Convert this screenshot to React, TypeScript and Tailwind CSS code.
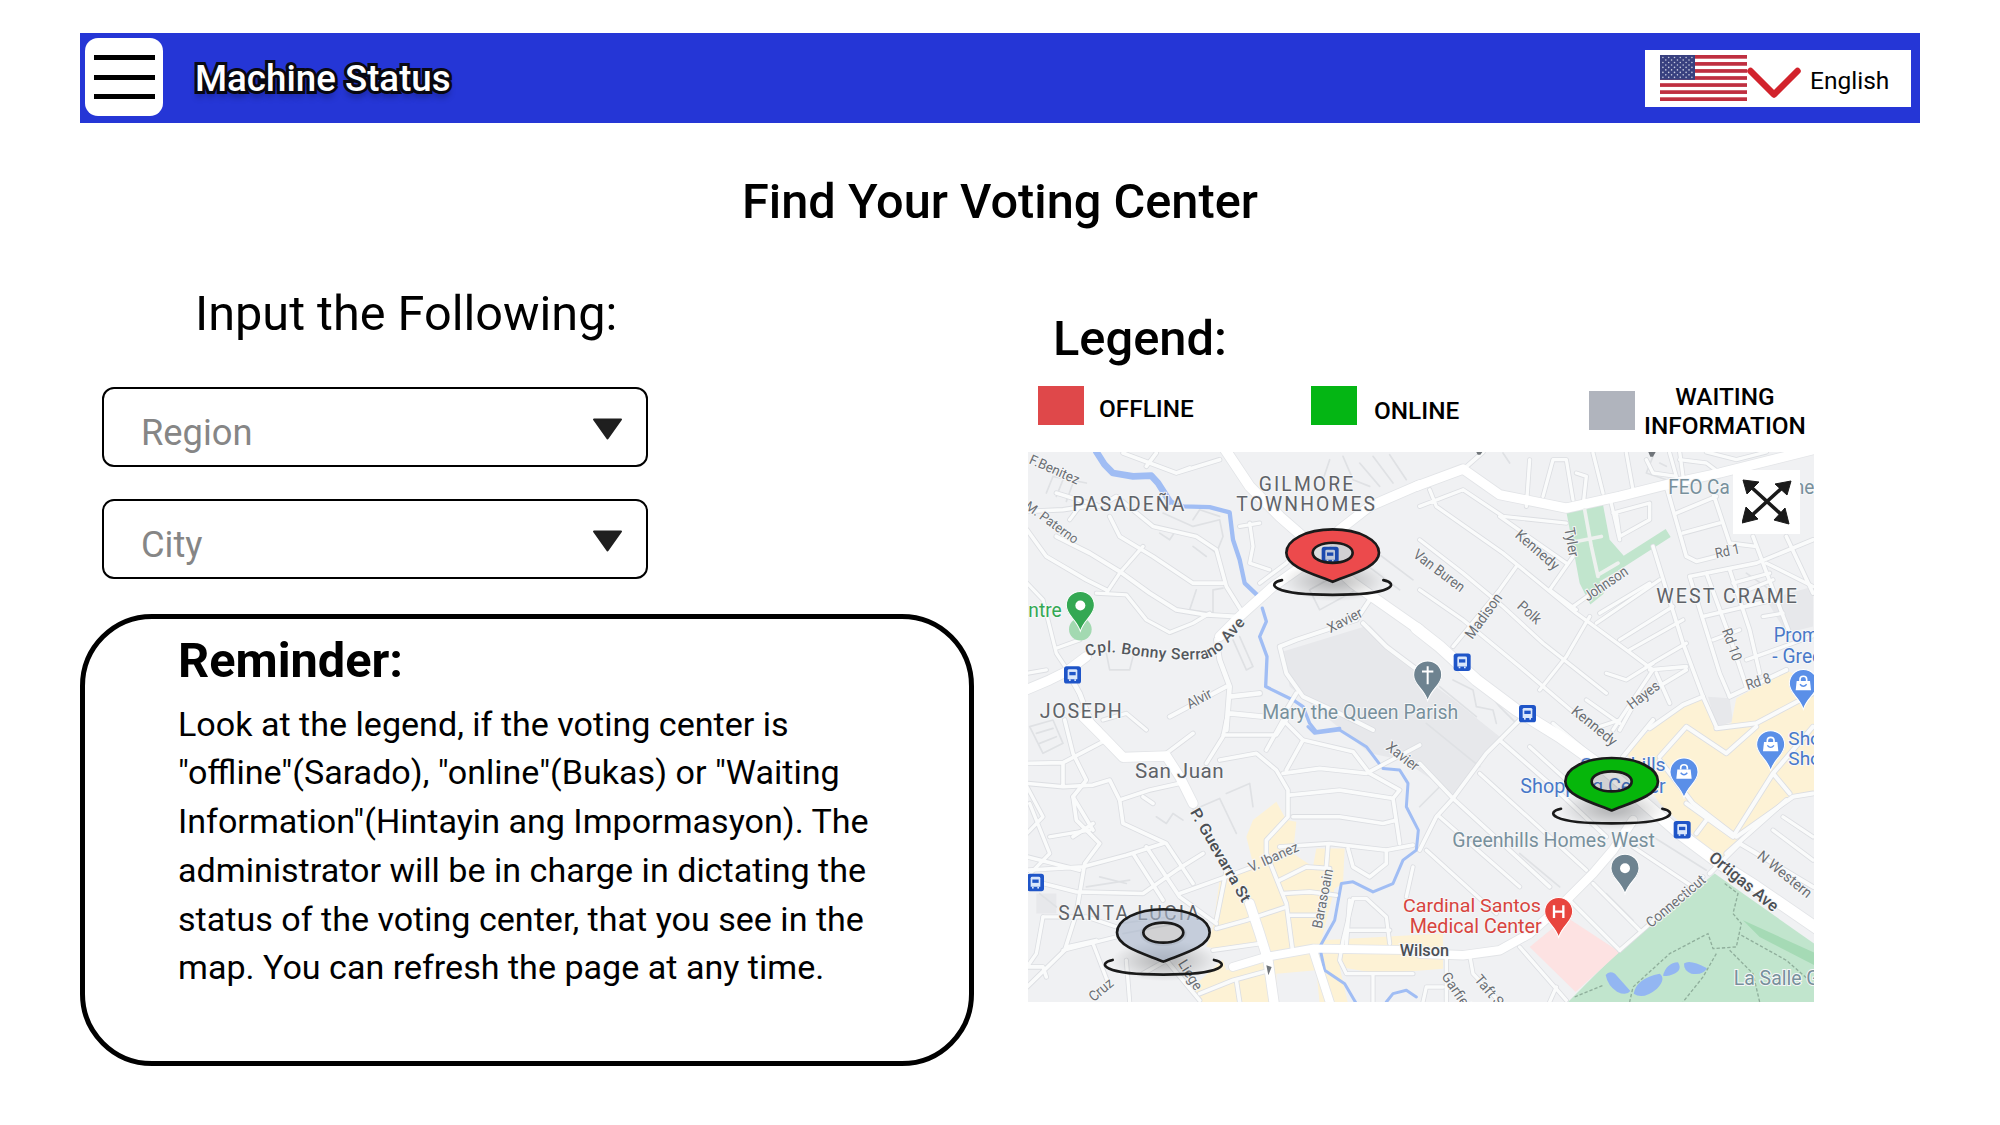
import React from "react";

/* Map drawing: three drawing units per rendered pixel. */

type Road = [width: number, d: string, dx?: number, dy?: number];

const mainRoads: Road[] = [
  // north-west quarter
  [30, "M610 20 L690 140 L780 230 L860 300 L1000 430 L1100 500 L1200 570"],
  [28, "M0 758 L90 720 L140 695 L200 650 M600 590 L660 530 L760 440 L860 370 L960 270 L1050 200 L1200 135"],
  // north-east quarter
  [28, "M-10 140 L130 88 L240 165 L440 205 L600 170 L760 130 L900 100 L1200 25", 1200, 0],
  [34, "M-10 565 L60 620 L170 720 L290 810 L420 890 L560 990 L780 1180 L900 1270 L1010 1340 L1200 1470", 1200, 0],
  // south-west quarter
  [28, "M190 -10 L250 50 L310 112 L440 108 L480 170 L520 250 M690 550 L720 640 L745 720 L765 860", 0, 840],
  [24, "M640 740 L740 710 L880 685 L1200 690 M880 690 L935 860", 0, 840],
  // south-east quarter
  [26, "M0 700 L130 705 L240 690 L330 640 L420 560 L520 460 L580 390 L640 300", 1200, 840],
];

const streets: Road[] = [
  [11, "M310 40 L470 100 L600 60 M380 80 L410 40 M470 100 L510 85"],
  [11, "M22 215 L130 210 L230 195 M110 160 L240 200 L290 170 L400 260 L530 290 L590 330 L620 440 L670 520"],
  [12, "M110 290 L210 340 L300 395 L390 460 L470 510 L560 525 L650 530"],
  [11, "M22 270 L80 350 L200 420 L260 450 M270 230 L300 290 L400 350 L520 430 L610 430"],
  [10, "M370 320 L300 400 L260 460 M150 240 L180 200 M230 460 L320 465 L380 540 L450 578 L520 550 L570 520"],
  [10, "M22 430 L70 480 L110 640 L150 700 L230 870 M110 625 L180 600"],
  [14, "M140 690 L180 760 L210 840 L240 870 M590 600 L600 660 L630 740 L620 870 M630 770 L720 760 M630 820 L730 830"],
  [12, "M780 620 L830 600 L920 570 L1010 540 L1050 480 M780 620 L800 700 L850 770 L980 830 L1060 870"],
  [12, "M1030 550 L1100 620 L1200 695 M830 760 L800 810 M450 830 L620 740"],
  [10, "M250 840 L320 820 L380 870 M22 700 L80 690"],
  [10, "M690 250 L700 320 L690 370 L750 390 M660 260 L720 250 M720 430 L800 370 L860 300"],

  [10, "M0 200 L130 150 L250 230 L440 250 M30 150 L50 200 L250 340 L470 520 L620 630 L700 690", 1200, 0],
  [10, "M0 300 L130 400 L250 500 L370 610 L560 760 M0 450 L130 540 L300 680 L500 850 M240 230 L440 370", 1200, 0],
  [10, "M290 380 L240 450 L100 620 M460 350 L390 450 L470 510 M510 530 L440 650 L360 750 M700 690 L580 870", 1200, 0],
  [10, "M320 200 L330 60 M370 170 L400 60 L440 60 L460 180 M490 200 L500 110 L470 100 M520 40 L550 160 M620 40 L640 150", 1200, 0],
  [11, "M130 90 L190 37 M740 140 L800 350 L830 365 L890 350 M700 320 L740 450 L790 610 L850 770 L890 860", 1200, 0],
  [11, "M770 220 L890 170 M880 160 L930 310 L1010 320 M790 280 L900 250 M1000 290 L1060 450 L1110 580 M1100 290 L1180 460", 1200, 0],
  [11, "M810 410 L1010 370 L1180 300 M810 410 L850 540 L900 700 L930 770 M850 530 L1060 480 M930 390 L990 570 L1020 700 M860 400 L930 590 L980 740", 1200, 0],
  [10, "M940 430 L1050 400 M960 460 L1060 420 M880 600 L960 570 M980 660 L1120 610 L1200 580 M1030 530 L1090 520", 1200, 0],
  [10, "M530 550 L720 420 M540 520 L690 430 M600 600 L760 500 M630 630 L790 540 M680 680 L800 610 M460 500 L600 400", 1200, 0],
  [10, "M590 220 L600 290 L690 240 L690 190 L580 220 M570 170 L600 300 M780 60 L860 70 L900 100 M860 37 L950 60 L1040 37", 1200, 0],
  [10, "M680 60 L700 100 L770 110 L750 40 M780 37 L790 110 M1040 370 L1180 440 M500 780 L600 850 M560 700 L620 720 L700 670", 1200, 0],
  [11, "M690 690 L800 680 M710 700 L750 790 M600 870 L650 780 L800 690", 1200, 0],
  [12, "M690 865 L790 795 L850 770 M930 770 L1100 690 M890 865 L1010 850 L1180 760", 1200, 0],

  [11, "M135 0 L160 100 L200 180 L160 230 L170 300 L240 370 L195 430 L170 580 L135 690 L22 800", 0, 840],
  [11, "M22 130 L130 128 L250 65 M130 130 L130 200 L22 190 M130 200 L220 195 L270 180 L300 240 L310 310 L440 370 L520 490", 0, 840],
  [11, "M300 240 L390 210 L480 190 M440 100 L520 40 M560 130 L610 50 L620 0 M610 45 L770 45 L800 0 M600 120 L710 100 L770 150 L805 210 L805 290 L740 360 L740 400 L800 550 L820 700", 0, 840],
  [11, "M740 90 L790 0 L850 60 L1000 95 L1050 160 L1140 210 L1120 235 L960 210 L810 225", 0, 840],
  [11, "M790 160 L900 145 L1040 160 L1200 75 M800 150 L850 60 M820 290 L960 290 L1090 310 L1130 300 M1120 235 L1140 370 M780 380 L930 370 L1100 390 L1180 375", 0, 840],
  [11, "M22 450 L190 440 L320 405 L430 370 M22 410 L180 450 M70 490 L170 515 L370 520 L470 450 L550 400 M340 400 L430 540", 0, 840],
  [11, "M380 380 L480 530 L590 610 M480 520 L620 470 L700 440 M620 450 L590 600 M590 625 L680 600 L800 560 M580 690 L720 670", 0, 840],
  [10, "M70 590 L200 590 L290 620 M130 690 L290 650 M220 670 L270 800 M320 720 L330 845 M140 680 L230 660", 0, 840],
  [11, "M780 480 L860 440 L930 445 M790 520 L870 515 L950 525 M810 585 L900 585 M925 375 L920 440 M985 385 L1000 440 L1050 470 L1100 430 L1100 390", 0, 840],
  [11, "M540 820 L640 780 L750 750 M650 780 L660 845 M370 760 L440 720 L540 840 M990 540 L980 670 M990 630 L1110 630", 0, 840],
  [10, "M1110 670 L1100 590 L1040 535 L1000 535 L970 660 L960 720 L980 760 L1180 760 M1060 760 L1060 845 M1180 440 L1160 530", 0, 840],
  [10, "M22 200 L70 290 L22 340 M30 250 L90 400 L22 470 M90 350 L210 330 M70 590 L50 700 L22 740", 0, 840],
  [11, "M160 230 L220 330 M160 350 L220 310 M370 230 L400 250 M22 740 L70 740 L80 770", 0, 840],

  [11, "M0 390 L50 290 L100 235 L200 100 L250 50 L300 0 M100 235 L0 130 M100 235 L390 500 M240 60 L400 200 L560 350", 1200, 840],
  [10, "M60 290 L300 500 M20 390 L230 580 M180 160 L500 450 M330 80 L440 180 M520 490 L660 630 M640 380 L820 500 M450 540 L600 690", 1200, 840],
  [10, "M300 680 L440 840 M80 705 L80 845 M150 705 L160 760 L240 845 M390 845 L410 800 M10 845 L20 800 L70 800", 1200, 840],
  [12, "M610 110 L700 0 M720 110 L800 20 L920 100 L1010 20 M720 120 L820 250 L950 350 L1120 230 L1180 220", 1200, 840],
  [12, "M800 250 L940 350 L1060 160 L1110 220 M1060 160 L1180 20 M860 300 L830 340 M920 400 L1100 240 M870 460 L960 370 L1180 500", 1200, 840],
  [10, "M850 470 L680 620 L600 690 M400 10 L520 110 M540 20 L600 0 M1090 290 L1180 350 M1060 330 L1180 420", 1200, 840],
];

/* Thin back streets, drawn as outlines only. */
const lanes: Road[] = [
  [5, "M80 160 L100 110 L200 130 M110 170 L130 120 M140 185 L160 130 M60 60 L110 100"],
  [5, "M430 220 L520 260 L600 240 L610 290 L590 340 L540 300 M520 240 L540 210 L600 230 M520 320 L560 350 M420 280 L450 300 L470 270"],
  [5, "M530 450 L510 510 L580 520 L580 450 L610 445 M260 640 L270 690 L330 690 L340 650 M640 600 L680 690 L700 680 L660 590"],
  [5, "M870 450 L960 400 L1010 450 L900 510 Z M1020 360 L1140 450 M1060 330 L1180 420 M930 60 L910 120 M970 50 L1000 120 L1050 140 M1020 70 L1080 140 M1060 50 L1120 130 M1110 45 L1160 120"],
  [5, "M30 20 L100 0 L130 70 L70 100 Z M50 40 L100 25 M60 70 L110 50 M410 290 L440 310 L460 280 L490 300 M520 270 L600 235 L650 340 M620 220 L690 190 L700 260", 0, 840],
  [5, "M200 500 L330 480 M240 470 L320 490 M60 520 L110 560 M300 610 L450 590 M310 640 L470 610", 0, 840],
  [5, "M100 720 L160 750 L170 800 L220 810 L230 850 M200 750 L240 800 L290 850 M60 740 L170 830 M250 40 L270 70", 1200, 0],
  [5, "M980 400 L1080 470 M700 50 L680 100 L740 120 M720 70 L740 80", 1200, 0],
  [5, "M20 10 L180 140 M60 200 L0 260 M160 290 L360 470 M300 400 L420 500 M700 350 L860 450 M560 520 L640 600", 1200, 840],
];

const rivers: Road[] = [
  [20, "M230 36 L255 75 L280 100 L340 110 L395 108 L415 130 L450 185"],
  [13, "M450 185 L490 200 L570 202 L630 218 L640 300 L660 360 L675 430 L715 468"],
  [10, "M728 505 L740 545 L720 590 L742 650 L738 740 L820 780 L850 800 L870 850 L890 875 L960 865"],
  [9, "M865 20 L885 40 L960 30 L1040 80 L1078 130 M1090 145 L1140 150 L1165 190 L1160 260 L1196 330 L1190 390 L1150 420 L1120 490 L1060 515 L1000 485 L965 490 L945 600 L900 680 L915 750 L975 790 L1010 850 M1100 845 L1120 820 L1160 810 L1190 830", 0, 840],
];

const place = (r: Road) => `translate(${r[2] ?? 0} ${r[3] ?? 0})`;

const labelColors = {
  area: "#5f6368",
  street: "#6b6f74",
  road: "#4b4f54",
  poi: "#78909c",
  shop: "#4878c8",
  med: "#d8453e",
  park: "#34a853",
};

type Label = {
  t: string;
  x: number;
  y: number;
  s: number;
  w: number;
  r?: number;
  c: keyof typeof labelColors;
};

const labels: Label[] = [
  { t: "F.Benitez", x: 26, y: 70, s: 41, w: 160, r: 24, c: "street" },
  { t: "M. Paterno", x: 14, y: 205, s: 40, w: 185, r: 36, c: "street" },
  { t: "PASADEÑA", x: 158, y: 214, s: 58, w: 336, c: "area" },
  { t: "GILMORE", x: 717, y: 154, s: 58, w: 284, c: "area" },
  { t: "TOWNHOMES", x: 650, y: 214, s: 58, w: 416, c: "area" },
  { t: "ntre", x: 26, y: 531, s: 58, w: 100, c: "park" },
  { t: "Xavier", x: 932, y: 580, s: 43, w: 112, r: -27, c: "street" },
  { t: "Alvir", x: 510, y: 808, s: 43, w: 80, r: -28, c: "street" },
  { t: "JOSEPH", x: 60, y: 835, s: 59, w: 246, c: "area" },
  { t: "Mary the Queen Parish", x: 728, y: 836, s: 58, w: 588, c: "poi" },
  { t: "Van Buren", x: 1178, y: 350, s: 44, w: 180, r: 37, c: "street" },
  { t: "Kennedy", x: 1484, y: 290, s: 44, w: 158, r: 41, c: "street" },
  { t: "Tyler", x: 1634, y: 266, s: 44, w: 88, r: 80, c: "street" },
  { t: "Madison", x: 1358, y: 600, s: 44, w: 156, r: -54, c: "street" },
  { t: "Polk", x: 1490, y: 502, s: 44, w: 80, r: 42, c: "street" },
  { t: "Johnson", x: 1704, y: 486, s: 44, w: 150, r: -34, c: "street" },
  { t: "FEO Ca", x: 1946, y: 164, s: 59, w: 184, c: "poi" },
  { t: "ne", x: 2322, y: 164, s: 58, w: 62, c: "poi" },
  { t: "Rd 1", x: 2090, y: 356, s: 43, w: 74, r: -12, c: "street" },
  { t: "WEST CRAME", x: 1910, y: 490, s: 59, w: 422, c: "area" },
  { t: "Rd 10", x: 2106, y: 572, s: 43, w: 100, r: 70, c: "street" },
  { t: "Rd 8", x: 2184, y: 750, s: 43, w: 76, r: -18, c: "street" },
  { t: "Hayes", x: 1836, y: 810, s: 44, w: 110, r: -37, c: "street" },
  { t: "Kennedy", x: 1652, y: 818, s: 44, w: 162, r: 39, c: "street" },
  { t: "Prom", x: 2262, y: 606, s: 58, w: 134, c: "shop" },
  { t: "- Gree", x: 2258, y: 670, s: 58, w: 150, c: "shop" },
  { t: "San Juan", x: 346, y: 1014, s: 62, w: 266, c: "area" },
  { t: "Xavier", x: 1096, y: 926, s: 44, w: 112, r: 38, c: "street" },
  { t: "P. Guevarra St", x: 510, y: 1116, s: 46, w: 316, r: 60, c: "road" },
  { t: "V. Ibanez", x: 694, y: 1296, s: 42, w: 160, r: -24, c: "street" },
  { t: "Barasoain", x: 906, y: 1466, s: 43, w: 180, r: -79, c: "street" },
  { t: "SANTA LUCIA", x: 116, y: 1438, s: 58, w: 422, c: "area" },
  { t: "Liege", x: 474, y: 1570, s: 43, w: 98, r: 58, c: "street" },
  { t: "Cruz", x: 222, y: 1686, s: 43, w: 82, r: -40, c: "street" },
  { t: "Wilson", x: 1140, y: 1548, s: 50, w: 148, c: "road" },
  { t: "Greenhills", x: 1680, y: 994, s: 57, w: 258, c: "shop" },
  { t: "Shopping Center", x: 1502, y: 1060, s: 58, w: 436, c: "shop" },
  { t: "Sho", x: 2306, y: 914, s: 57, w: 98, c: "shop" },
  { t: "Sho", x: 2306, y: 976, s: 57, w: 98, c: "shop" },
  { t: "Greenhills Homes West", x: 1298, y: 1220, s: 60, w: 608, c: "poi" },
  { t: "Cardinal Santos", x: 1150, y: 1414, s: 57, w: 414, c: "med" },
  { t: "Medical Center", x: 1170, y: 1478, s: 58, w: 396, c: "med" },
  { t: "Ortigas Ave", x: 2064, y: 1258, s: 50, w: 252, r: 39, c: "road" },
  { t: "N Western", x: 2210, y: 1252, s: 44, w: 196, r: 39, c: "street" },
  { t: "Connecticut", x: 1894, y: 1464, s: 43, w: 218, r: -40, c: "street" },
  { t: "Garfield", x: 1264, y: 1608, s: 43, w: 146, r: 56, c: "street" },
  { t: "Taft St", x: 1362, y: 1618, s: 43, w: 124, r: 50, c: "street" },
  { t: "La Salle G", x: 2142, y: 1634, s: 58, w: 258, c: "poi" },
];

function Bus({ x, y }: { x: number; y: number }) {
  return (
    <g transform={`translate(${x} ${y})`}>
      <rect x="-25" y="-25" width="51" height="52" rx="8" fill="#1f55c8" />
      <path d="M-14 -12 Q-14 -16 -9 -16 H10 Q15 -16 15 -12 V14 H-14 Z" fill="#d9e6fb" />
      <rect x="-9" y="-8" width="19" height="10" fill="#1f55c8" />
      <rect x="-10" y="14" width="5" height="5" fill="#d9e6fb" />
      <rect x="6" y="14" width="5" height="5" fill="#d9e6fb" />
    </g>
  );
}

function Poi({ x, y, fill, children }: { x: number; y: number; fill: string; children?: React.ReactNode }) {
  return (
    <g transform={`translate(${x} ${y})`}>
      <path d="M0 -42 C24 -42 42 -24 42 0 C42 30 12 40 0 77 C-12 40 -42 30 -42 0 C-42 -24 -24 -42 0 -42 Z" fill={fill} stroke="#fff" strokeWidth="3" />
      {children}
    </g>
  );
}

function Bag() {
  return (
    <g>
      <path d="M-20 -8 H20 L23 20 H-23 Z" fill="#fff" />
      <path d="M-10 -8 V-13 Q-10 -22 0 -22 Q10 -22 10 -13 V-8" fill="none" stroke="#fff" strokeWidth="5" />
      <path d="M-10 2 Q0 14 10 2" fill="none" stroke="#5a8fe8" strokeWidth="4" />
    </g>
  );
}

function StatusMarker({ x, y, fill, opacity = 1 }: { x: number; y: number; fill: string; opacity?: number }) {
  return (
    <g transform={`translate(${x} ${y})`}>
      <ellipse cx="0" cy="4" rx="70" ry="36" fill="#000" fillOpacity="0.13" />
      <ellipse cx="5" cy="84" rx="160" ry="62" fill="url(#markerShade)" />
      <path
        fillRule="evenodd"
        d="M0 -70 C80 -70 139 -38 139 0 C139 44 50 66 0 87 C-50 66 -139 44 -139 0 C-139 -38 -80 -70 0 -70 Z M0 -30 C-34 -30 -60 -17 -60 0 C-60 18 -34 30 0 30 C34 30 60 18 60 0 C60 -17 34 -30 0 -30 Z"
        fill={fill}
        fillOpacity={opacity}
        stroke="#1a1a1a"
        strokeWidth="8"
        strokeLinejoin="round"
      />
      <path d="M-152 82 C-200 92 -185 126 0 126 C185 126 200 92 152 82" fill="none" stroke="#1a1a1a" strokeWidth="8" strokeLinecap="round" />
    </g>
  );
}

function CityMap() {
  return (
    <svg className="block h-full w-full" viewBox="25 37 2358 1648" preserveAspectRatio="none" fontFamily="Roboto, sans-serif">
      <defs>
        <radialGradient id="markerShade">
          <stop offset="0.2" stopColor="#000" stopOpacity="0.22" />
          <stop offset="1" stopColor="#000" stopOpacity="0" />
        </radialGradient>
        <path id="serrano" d="M205 652 Q240 630 300 640 C390 654 470 662 545 658 C600 654 620 610 690 536" />
      </defs>
      <rect x="0" y="0" width="2400" height="1700" fill="#f0f1f3" />

      {/* blocks */}
      <g fill="#e7e8eb">
        <path d="M790 635 L1050 555 L1180 690 L1290 770 L1440 890 L1305 1065 L1150 960 L1050 940 L870 790 L810 740 Z" />
        <path d="M50 1360 H110 V1420 H50 Z M2065 770 L2130 775 L2140 845 L2090 860 Z M2240 480 L2380 440 L2380 560 L2300 580 Z" />
      </g>
      <path
        fill="#fdf2d5"
        d="M1880 880 L1990 800 L2050 770 L2090 860 L2135 850 L2150 775 L2300 690 L2390 740 L2390 1050 L2310 1070 L2160 1190 L2110 1250 L2060 1220 L1920 1090 L1820 940 Z"
      />
      <path
        fill="#fdf2d5"
        d="M600 1320 L700 1270 L680 1190 L700 1140 L770 1085 L800 1140 L830 1145 L820 1240 L880 1280 L890 1225 L975 1225 L970 1330 L945 1345 L905 1500 L1270 1480 L1270 1585 L1080 1600 L960 1580 L985 1690 L540 1690 L520 1640 L640 1530 L560 1520 L580 1460 Z"
      />
      <path fill="#f0f1f3" d="M770 1600 L890 1590 L900 1690 L770 1690 Z M600 1530 L720 1510 L740 1550 L620 1590 Z M990 1370 L1090 1400 L1110 1470 H985 Z" />
      <path fill="#c1e5cd" d="M1640 215 L1750 195 L1770 300 L1812 348 L1938 268 L1953 292 L1800 390 L1740 425 L1752 462 L1712 494 L1680 430 Z" />
      <path fill="#c1e5cd" d="M2085 1300 L2390 1515 V1690 H1640 L1800 1530 Z" />
      <path fill="#a5dab5" d="M2170 1440 L2390 1540 V1578 L2220 1490 Z" />
      <path fill="#fde2e2" d="M1640 1430 L1800 1535 L1668 1655 L1530 1520 Z" />
      <g fill="#93b6f2">
        <path d="M1758 1604 Q1768 1590 1786 1600 L1832 1652 Q1820 1668 1792 1654 Q1764 1636 1758 1604 Z M1842 1660 Q1850 1614 1920 1600 Q1940 1615 1912 1645 Q1870 1680 1842 1660 Z M1930 1606 Q1940 1568 1975 1566 Q1990 1590 1960 1602 Q1945 1610 1930 1606 Z M1993 1570 Q2010 1556 2062 1584 Q2050 1606 2015 1600 Q1992 1592 1993 1570 Z" />
      </g>
      <path
        d="M2115 1330 L2155 1360 L2140 1420 L2165 1450 L2150 1520 L2080 1525 L2065 1480 L1950 1540 L1840 1640 L1830 1685 M1665 1670 L1750 1635 M2165 1485 L2300 1560 L2380 1630 M2130 1530 L2200 1600 L2220 1685 M2090 1540 L2050 1610 L1990 1685"
        fill="none"
        stroke="#8fae9b"
        strokeWidth="4"
        strokeDasharray="10 6"
      />

      {/* roads: casing first, surface on top */}
      <g fill="none" strokeLinejoin="round" strokeLinecap="round">
        {lanes.map((r, i) => (
          <path key={i} d={r[1]} transform={place(r)} stroke="#dfe1e4" strokeWidth={r[0]} />
        ))}
        {streets.map((r, i) => (
          <path key={i} d={r[1]} transform={place(r)} stroke="#dcdee2" strokeWidth={r[0] + 5} />
        ))}
        {mainRoads.map((r, i) => (
          <path key={i} d={r[1]} transform={place(r)} stroke="#e2e4e7" strokeWidth={r[0] + 5} />
        ))}
        {rivers.map((r, i) => (
          <path key={i} d={r[1]} transform={place(r)} stroke="#a0bdf4" strokeWidth={r[0]} />
        ))}
        {streets.map((r, i) => (
          <path key={i} d={r[1]} transform={place(r)} stroke="#fafbfb" strokeWidth={r[0]} />
        ))}
        {mainRoads.map((r, i) => (
          <path key={i} d={r[1]} transform={place(r)} stroke="#ffffff" strokeWidth={r[0]} />
        ))}
        <path d="M1695 210 L1715 320 L1735 410 M1670 305 L1745 290 M1735 405 L1795 370" stroke="#eef1ef" strokeWidth="11" />
      </g>

      <circle cx="182" cy="568" r="34" fill="#a3d9b1" />
      <Bus x={931} y={346} />
      <Bus x={158} y={704} />
      <Bus x={1327} y={666} />
      <Bus x={1523} y={820} />
      <Bus x={1987} y={1168} />
      <Bus x={47} y={1326} />

      {labels.map((l, i) => (
        <text
          key={i}
          x={l.x}
          y={l.y}
          fontSize={l.s}
          textLength={l.w}
          lengthAdjust={l.c === "area" ? "spacing" : "spacingAndGlyphs"}
          fontWeight={l.c === "road" ? 500 : 400}
          fill={labelColors[l.c]}
          stroke="#f6f7f8"
          strokeWidth="6"
          paintOrder="stroke"
          transform={l.r ? `rotate(${l.r} ${l.x} ${l.y})` : undefined}
        >
          {l.t}
        </text>
      ))}
      <text fontSize="47" fontWeight="500" fill="#54585d" stroke="#f6f7f8" strokeWidth="6" paintOrder="stroke">
        <textPath href="#serrano" textLength="520">
          Cpl. Bonny Serrano Ave
        </textPath>
      </text>
      <path d="M1886 37 h22 l-8 14 h-8 Z M1370 37 h18 l-6 8 h-8 Z M740 1575 L746 1605 L756 1580" fill="#70757a" />

      <Poi x={182} y={497} fill="#34a853">
        <circle r="15" fill="#fff" />
      </Poi>
      <Poi x={1224} y={705} fill="#6e8390">
        <path d="M0 -26 V28 M-17 -10 H17" stroke="#fff" strokeWidth="6" />
      </Poi>
      <Poi x={2351} y={731} fill="#5a8fe8">
        <Bag />
      </Poi>
      <Poi x={2253} y={914} fill="#5a8fe8">
        <Bag />
      </Poi>
      <Poi x={1993} y={996} fill="#5a8fe8">
        <Bag />
      </Poi>
      <Poi x={1816} y={1284} fill="#6e8390">
        <circle r="15" fill="#fff" />
      </Poi>
      <Poi x={1617} y={1414} fill="#e8453e">
        <path d="M-14 -19 V19 M14 -19 V19 M-14 0 H14" stroke="#fff" strokeWidth="7" />
      </Poi>

      <StatusMarker x={939} y={339} fill="#ec4a4c" />
      <StatusMarker x={1776} y={1024} fill="#06b60b" />
      <StatusMarker x={431} y={1477} fill="#a9b6cb" opacity={0.6} />
    </svg>
  );
}

function ExpandIcon() {
  return (
    <svg className="h-[46px] w-[50px]" viewBox="0 0 50 46">
      <path d="M8 7 L42 38 M42 7 L8 38" stroke="#1a1a1a" strokeWidth="3.6" />
      <path d="M1 1 L17 3 L5 15 Z M49 2 L33 5 L45 16 Z M0 44 L4 28 L16 40 Z M47 45 L32 41 L43 29 Z" fill="#1a1a1a" stroke="#1a1a1a" strokeLinejoin="round" />
    </svg>
  );
}

function Flag() {
  return (
    <svg className="h-[46px] w-[87px]" viewBox="0 0 87 46" preserveAspectRatio="none">
      <rect width="87" height="46" fill="#fff" />
      {[0, 1, 2, 3, 4, 5, 6].map((i) => (
        <rect key={i} y={i * 7.05} width="87" height="3.7" fill="#bf2f40" />
      ))}
      <rect width="35" height="24.8" fill="#38407f" />
      {[0, 1, 2, 3, 4, 5, 6, 7, 8].map((row) =>
        Array.from({ length: row % 2 ? 5 : 6 }, (_, i) => (
          <circle key={`${row}-${i}`} cx={(row % 2 ? 5.8 : 2.9) + i * 5.8} cy={2.5 + row * 2.48} r="0.8" fill="#c9cce0" />
        ))
      )}
    </svg>
  );
}

function Select({ label }: { label: string }) {
  return (
    <button className="flex h-[80px] w-[546px] items-center justify-between rounded-[12px] border-[2.5px] border-black bg-white pr-[23px] pl-[37px]">
      <span className="pt-[12px] text-[36.3px] leading-none text-[#868686]">{label}</span>
      <svg className="mt-[4px] h-[22px] w-[31px]" viewBox="0 0 31 22">
        <path d="M2 1.5 H29 L15.5 20.5 Z" fill="#1f1f1f" stroke="#1f1f1f" strokeWidth="2" strokeLinejoin="round" />
      </svg>
    </button>
  );
}

export default function App() {
  return (
    <div className="h-[1125px] w-[2000px] overflow-hidden bg-white pt-[33px] font-['Roboto',sans-serif] text-black">
      <header className="mx-[80px] flex h-[90px] items-center bg-[#2536d6] pr-[9px] pl-[5px]">
        <button className="mt-[-2px] flex h-[78px] w-[78px] flex-col items-center justify-center gap-[14.5px] rounded-[13px] bg-white">
          <span className="h-[5px] w-[61px] bg-black" />
          <span className="h-[5px] w-[61px] bg-black" />
          <span className="h-[5px] w-[61px] bg-black" />
        </button>
        <h1 className="ml-[32px] pt-[3px] text-[36.7px] leading-none font-medium text-white [-webkit-text-stroke:6px_#0a0a14] [paint-order:stroke_fill] [text-shadow:0_6px_6px_rgba(0,0,0,0.35)]">
          Machine Status
        </h1>
        <div className="ml-auto flex h-[57px] w-[266px] items-center bg-white pl-[15px]">
          <Flag />
          <svg className="mt-[9px] h-[32px] w-[54px]" viewBox="0 0 54 32">
            <path d="M3.5 4 L27 27.5 L50.5 4" fill="none" stroke="#d2232c" strokeWidth="6.5" strokeLinecap="round" strokeLinejoin="round" />
          </svg>
          <span className="ml-[9px] pt-[6px] text-[24.5px] leading-none">English</span>
        </div>
      </header>

      <h2 className="mt-[54px] text-center text-[48.7px] leading-[50px] font-medium">Find Your Voting Center</h2>

      <main className="flex">
        <section className="ml-[80px] w-[894px] pt-[62px]">
          <h3 className="ml-[115px] text-[48.6px] leading-[50px]">Input the Following:</h3>
          <div className="mt-[48px] ml-[22px] flex flex-col gap-[32px]">
            <Select label="Region" />
            <Select label="City" />
          </div>
          <div className="mt-[35px] h-[452px] rounded-[72px] border-[5px] border-black pt-[17px] pl-[93px]">
            <h3 className="text-[48.7px] leading-[50px] font-bold">Reminder:</h3>
            <p className="mt-[13.5px] text-[34.1px] leading-[48.8px] whitespace-nowrap">
              Look at the legend, if the voting center is
              <br />
              "offline"(Sarado), "online"(Bukas) or "Waiting
              <br />
              Information"(Hintayin ang Impormasyon). The
              <br />
              administrator will be in charge in dictating the
              <br />
              status of the voting center, that you see in the
              <br />
              map. You can refresh the page at any time.
            </p>
          </div>
        </section>

        <section className="ml-[54px] w-[786px] pt-[87px]">
          <h3 className="ml-[25px] text-[48.8px] leading-[50px] font-medium">Legend:</h3>
          <div className="mt-[15px] flex h-[73px] items-start pl-[10px] text-[24.4px] leading-[29px] font-medium">
            <div className="flex w-[273px]">
              <span className="mt-[7px] h-[39px] w-[46px] bg-[#df484a]" />
              <span className="mt-[15px] ml-[15px]">OFFLINE</span>
            </div>
            <div className="flex w-[278px]">
              <span className="mt-[7px] h-[39px] w-[46px] bg-[#04b614]" />
              <span className="mt-[17px] ml-[17px]">ONLINE</span>
            </div>
            <div className="flex">
              <span className="mt-[12px] h-[39px] w-[46px] bg-[#b0b4bd]" />
              <span className="mt-[3px] ml-[9px] text-center whitespace-nowrap">
                WAITING
                <br />
                INFORMATION
              </span>
            </div>
          </div>
          <div className="relative h-[550px] w-[786px] overflow-hidden">
            <CityMap />
            <button className="absolute top-[18px] left-[705px] flex h-[64px] w-[67px] items-center justify-center bg-white">
              <ExpandIcon />
            </button>
          </div>
        </section>
      </main>
    </div>
  );
}
